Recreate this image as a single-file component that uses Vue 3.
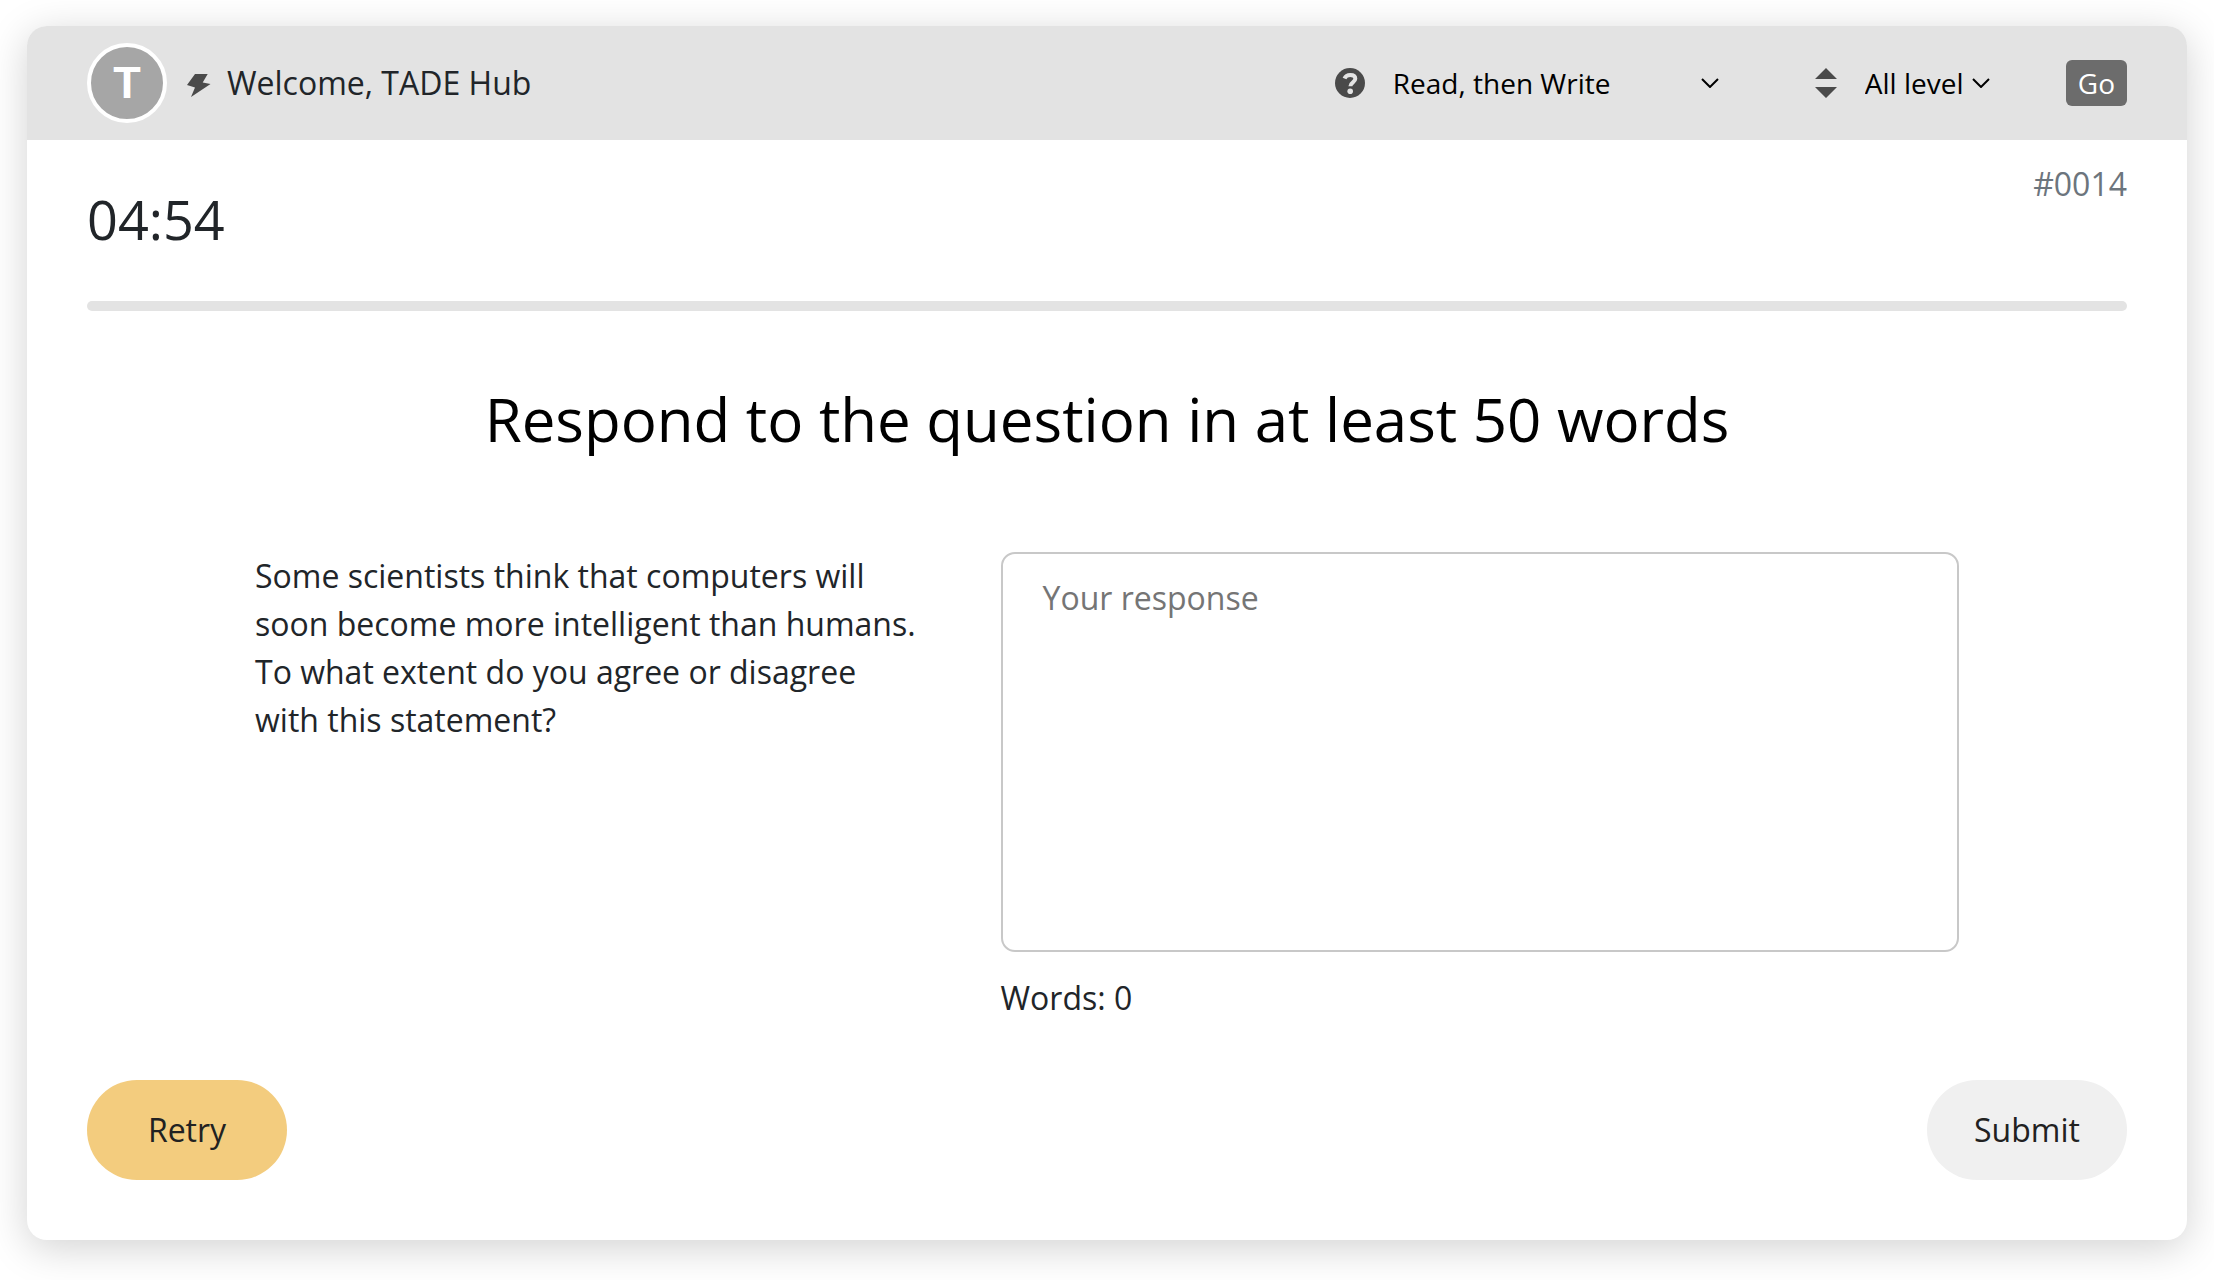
<script setup>
import { computed, ref } from 'vue'

const task = ref('Read, then Write')
const level = ref('All level')
const answer = ref('')
const words = computed(() => answer.value.split(/\s+/).filter(Boolean).length)
</script>

<template>
  <main class="page">
    <section class="card">
      <header class="topbar">
        <div class="user">
          <span class="avatar" aria-hidden="true">T</span>
          <svg class="bolt" viewBox="0 0 24 28" aria-hidden="true">
            <path d="M8 5h12.700L15.700 13.500l7.800 1.500L4 28l4-9.500L0 16z" />
          </svg>
          <span>Welcome, TADE Hub</span>
        </div>
        <form class="filters" @submit.prevent>
          <label class="field-label" for="task" aria-label="Question type">
            <svg class="help" viewBox="0 0 30 30">
              <circle cx="15" cy="15" r="15" />
              <path class="hook" d="M9.500 10.500C10.500 8 12.500 7 15.300 7c3.200 0 5 1.500 5 3.800 0 3.600-4.900 3.400-4.900 7.400" />
              <circle class="dot" cx="15.200" cy="23.200" r="2.800" />
            </svg>
          </label>
          <span class="picker picker-task">
            <select id="task" v-model="task">
              <option>Read, then Write</option>
            </select>
            <svg class="chevron" viewBox="0 0 18 10" aria-hidden="true"><path d="M1 1l8 8 8-8" /></svg>
          </span>
          <label class="field-label" for="level" aria-label="Level">
            <svg class="sort" viewBox="0 0 22 30">
              <path d="M11 0l11 11H0zM11 30L0 19h22z" />
            </svg>
          </label>
          <span class="picker picker-level">
            <select id="level" v-model="level">
              <option>All level</option>
            </select>
            <svg class="chevron" viewBox="0 0 18 10" aria-hidden="true"><path d="M1 1l8 8 8-8" /></svg>
          </span>
          <button class="go" type="submit">Go</button>
        </form>
      </header>

      <div class="body">
        <div class="status">
          <time class="timer">04:54</time>
          <span class="number">#0014</span>
        </div>
        <div class="progress"></div>
        <h1>Respond to the question in at least 50 words</h1>
        <div class="exercise">
          <p class="prompt">
            Some scientists think that computers will soon become more intelligent than humans.
            To what extent do you agree or disagree with this statement?
          </p>
          <div class="response">
            <textarea v-model="answer" placeholder="Your response" aria-label="Your response"></textarea>
            <p>Words: {{ words }}</p>
          </div>
        </div>
        <footer class="actions">
          <button class="pill retry" type="button">Retry</button>
          <button class="pill submit" type="button">Submit</button>
        </footer>
      </div>
    </section>
  </main>
</template>

<style>
body {
  margin: 0;
  background: #fff;
}
</style>

<style scoped>
* {
  box-sizing: border-box;
}
.page {
  padding: 26px 27px 40px;
  font-family: "Open Sans", "Noto Sans", sans-serif;
  font-size: 32px;
  line-height: 48px;
  color: #212529;
}
.card {
  border-radius: 20px;
  background: #fff;
  box-shadow: 0 8px 40px rgba(0, 0, 0, 0.18);
}
.topbar {
  display: flex;
  align-items: center;
  justify-content: space-between;
  height: 114px;
  padding: 0 60px;
  border-radius: 20px 20px 0 0;
  background: #e3e3e3;
}
.user,
.filters {
  display: flex;
  align-items: center;
}
.avatar {
  display: flex;
  align-items: center;
  justify-content: center;
  width: 80px;
  height: 80px;
  margin-right: 20px;
  border: 4px solid #fff;
  border-radius: 50%;
  background: #a6a6a6;
  color: #fff;
  font: bold 45px/74px "Liberation Sans", sans-serif;
}
.bolt {
  width: 24px;
  height: 28px;
  margin-right: 16px;
  fill: #4a4a4a;
}
.field-label {
  display: flex;
}
.help {
  width: 30px;
  height: 30px;
  margin-right: 28px;
  fill: #4a4a4a;
}
.help .hook {
  fill: none;
  stroke: #e3e3e3;
  stroke-width: 4;
}
.help .dot {
  fill: #e3e3e3;
}
.sort {
  width: 22px;
  height: 30px;
  margin-right: 28px;
  fill: #4a4a4a;
}
.picker {
  display: grid;
  align-items: center;
}
.picker-task {
  width: 326px;
  margin-right: 96px;
}
.picker-level {
  width: 125px;
  margin-right: 76px;
}
.picker select {
  grid-area: 1 / 1;
  appearance: none;
  width: 100%;
  height: 48px;
  padding: 0;
  border: 0;
  background: transparent;
  color: #000;
  font: inherit;
  font-size: 28px;
}
.chevron {
  grid-area: 1 / 1;
  justify-self: end;
  width: 18px;
  height: 10px;
  fill: none;
  stroke: #000;
  stroke-width: 2;
  pointer-events: none;
}
.go {
  height: 46px;
  padding: 0 12px;
  border: 0;
  border-radius: 6px;
  background: #6c6c6c;
  color: #fff;
  font: inherit;
  font-size: 28px;
  line-height: 46px;
}
.body {
  padding: 20px 60px 60px;
}
.status {
  display: flex;
  justify-content: space-between;
  align-items: flex-start;
}
.timer {
  padding: 17px 0 40px;
  font-size: 54px;
  line-height: 84px;
}
.number {
  color: #6c757d;
}
.progress {
  height: 10px;
  border-radius: 5px;
  background: #e3e3e3;
}
h1 {
  margin: 63px 0 88px;
  color: #000;
  font-size: 60px;
  font-weight: 400;
  line-height: 90px;
  text-align: center;
}
.exercise {
  display: grid;
  grid-template-columns: 7fr 9fr;
  padding: 0 168px;
}
.exercise p {
  margin: 0;
}
.prompt {
  padding-right: 80px;
}
textarea {
  display: block;
  width: 100%;
  height: 400px;
  margin-bottom: 22px;
  padding: 20px 40px;
  border: 2px solid #c8c8c8;
  border-radius: 14px;
  background: #fff;
  color: inherit;
  font: inherit;
  resize: none;
}
textarea::placeholder {
  color: #757575;
}
.actions {
  display: flex;
  justify-content: space-between;
  margin-top: 58px;
}
.pill {
  width: 200px;
  height: 100px;
  padding: 0;
  border: 0;
  border-radius: 50px;
  color: #212121;
  font: inherit;
}
.retry {
  background: #f3cc7e;
}
.submit {
  background: #f0f0f0;
}
</style>
